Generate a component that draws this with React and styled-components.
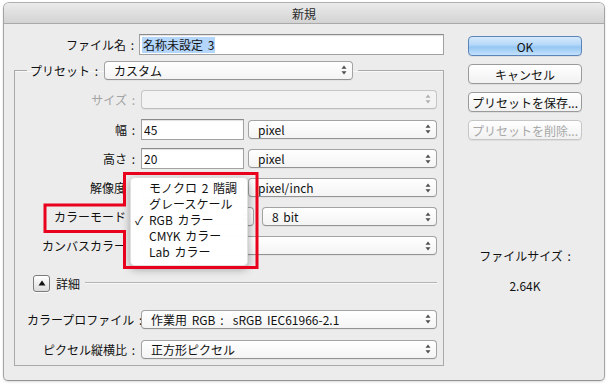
import React from 'react';
import styled, { createGlobalStyle } from 'styled-components';

const Global = createGlobalStyle`
  html, body { margin: 0; padding: 0; background: #fff; }
  body {
    font-family: "Noto Sans CJK JP", "Noto Sans", sans-serif;
    font-size: 12px;
    color: #111;
    word-spacing: 2px;
  }
  * { box-sizing: border-box; }
`;

const Page = styled.div`
  position: relative;
  width: 609px;
  height: 384px;
  padding: 3px 0 0 4px;
`;

const Window = styled.div`
  width: 600px;
  height: 377px;
  background: #ececec;
  border-radius: 5px 5px 4px 4px;
  box-shadow: 0 0 0 1px rgba(0, 0, 0, 0.28), 0 1px 3px rgba(0, 0, 0, 0.3);
  display: flex;
  flex-direction: column;
  overflow: hidden;
`;

const TitleBar = styled.div`
  flex: none;
  height: 21px;
  background: linear-gradient(#ebebeb, #d3d3d3);
  border-bottom: 1px solid #a9a9a9;
  display: flex;
  align-items: center;
  justify-content: center;
  font-size: 12px;
  color: #2a2a2a;
`;

const Body = styled.div`
  display: flex;
  padding: 10px 0 0 10px;
`;

const LeftCol = styled.div`
  width: 430px;
  display: flex;
  flex-direction: column;
`;

const FileRow = styled.div`
  display: grid;
  grid-template-columns: 120px 305px;
  column-gap: 5px;
  align-items: center;
  height: 21px;
`;

const Label = styled.div`
  text-align: right;
  white-space: nowrap;
  color: ${(p) => (p.$disabled ? '#a3a3a3' : '#111')};
  padding-right: ${(p) => (p.$covered ? 9 : 0)}px;
  ${(p) => (p.$w ? `width: ${p.$w}px; flex: none; margin-right: 6px;` : '')}
`;

const TextInput = styled.div`
  height: 21px;
  width: ${(p) => (p.$w ? `${p.$w}px` : '100%')};
  flex: none;
  background: #fff;
  border: 1px solid #a2a2a2;
  border-top-color: #8a8a8a;
  box-shadow: inset 0 1px 1px rgba(0, 0, 0, 0.12);
  display: flex;
  align-items: center;
  padding-left: 2px;
  white-space: nowrap;
  overflow: hidden;
`;

const Selected = styled.span`
  background: #b4d6fb;
  padding: 0 1px;
  line-height: 16px;
`;

const Group = styled.fieldset`
  margin: 5px 0 0 0;
  width: 430px;
  min-width: 0;
  border: 1px solid #a9a9a9;
  box-shadow: inset 0 1px 0 rgba(255, 255, 255, 0.6);
  padding: 4px 6px 1px 12px;
`;

const Legend = styled.legend`
  padding: 0 5px 0 3px;
  display: flex;
  align-items: center;
  gap: 6px;
  height: 20px;
`;

const SelectBox = styled.div`
  position: relative;
  height: ${(p) => p.$h || 19}px;
  width: ${(p) => (p.$w ? `${p.$w}px` : '100%')};
  flex: ${(p) => (p.$w ? 'none' : '1')};
  border: 1px solid ${(p) => (p.$disabled ? '#c6c6c6' : '#a3a3a3')};
  border-bottom-color: ${(p) => (p.$disabled ? '#bdbdbd' : '#939393')};
  border-radius: 4px;
  background: ${(p) =>
    p.$disabled ? '#f3f3f3' : 'linear-gradient(#ffffff, #f4f4f4)'};
  box-shadow: 0 1px 0 rgba(0, 0, 0, 0.04);
  display: flex;
  align-items: center;
  padding-left: 9px;
  white-space: pre;
  overflow: hidden;
  color: #111;
`;

const Arrows = styled.svg`
  position: absolute;
  right: 5px;
  top: 50%;
  margin-top: -5px;
`;

const SelectArrows = ({ disabled }) => (
  <Arrows width="6" height="10" viewBox="0 0 6 10">
    <path d="M3 0.5 L5.5 3.8 L0.5 3.8 Z" fill={disabled ? '#b0b0b0' : '#4e4e4e'} />
    <path d="M3 9.5 L5.5 6.2 L0.5 6.2 Z" fill={disabled ? '#b0b0b0' : '#4e4e4e'} />
  </Arrows>
);

const Select = ({ children, w, disabled }) => (
  <SelectBox $w={w} $disabled={disabled}>
    {children}
    <SelectArrows disabled={disabled} />
  </SelectBox>
);

const Row = styled.div`
  display: flex;
  align-items: center;
  height: ${(p) => p.$h}px;
  margin-top: ${(p) => p.$mt || 0}px;
`;

const Controls = styled.div`
  display: flex;
  align-items: center;
  gap: ${(p) => p.$gap || 4}px;
  flex: 1;
  min-width: 0;
`;

const DisclosureRow = styled.div`
  display: flex;
  align-items: center;
  height: 26px;
  margin-top: 10px;
  padding-left: 6px;
`;

const DisclosureButton = styled.div`
  width: 17px;
  height: 17px;
  flex: none;
  border: 1px solid #7c7c7c;
  border-radius: 3px;
  background: linear-gradient(#ffffff, #dcdcdc);
  box-shadow: 0 1px 0 rgba(255, 255, 255, 0.8);
  display: flex;
  align-items: center;
  justify-content: center;
`;

const DisclosureText = styled.span`
  margin-left: 6px;
`;

const Rule = styled.div`
  flex: 1;
  height: 2px;
  margin-left: 5px;
  border-top: 1px solid #b3b3b3;
  border-bottom: 1px solid #f8f8f8;
`;

const RightCol = styled.div`
  width: 114px;
  margin-left: 24px;
  display: flex;
  flex-direction: column;
  align-items: stretch;
  gap: 8px;
  padding-top: 2px;
`;

const Button = styled.div`
  height: 20px;
  border-radius: 4px;
  display: flex;
  align-items: center;
  justify-content: center;
  white-space: nowrap;
  border: 1px solid ${(p) => (p.$primary ? '#5d84b8' : p.$disabled ? '#c6c6c6' : '#9a9a9a')};
  background: ${(p) =>
    p.$primary
      ? 'linear-gradient(#d6eafc, #b3d7f8 45%, #94c6f3 55%, #c3e1fb)'
      : 'linear-gradient(#ffffff, #f1f1f1)'};
  color: ${(p) => (p.$disabled ? '#a8a8a8' : '#111')};
  box-shadow: 0 1px 0 rgba(0, 0, 0, 0.06);
`;

const Info = styled.div`
  text-align: center;
  line-height: 16px;
  margin-top: ${(p) => p.$mt}px;
`;

const Menu = styled.div`
  position: absolute;
  left: 130px;
  top: 177px;
  width: 118px;
  padding: 2px 0 5px;
  background: rgba(255, 255, 255, 0.98);
  border: 1px solid rgba(0, 0, 0, 0.12);
  border-radius: 5px;
  box-shadow: 0 3px 9px rgba(0, 0, 0, 0.35);
`;

const MenuItem = styled.div`
  position: relative;
  height: 16px;
  line-height: 16px;
  padding-left: 18px;
  white-space: nowrap;
  color: #111;
`;

const Check = styled.span`
  position: absolute;
  left: 4px;
  top: 0;
`;

const Annotation = styled.svg`
  position: absolute;
  left: 0;
  top: 0;
  pointer-events: none;
`;

export default function App() {
  return (
    <>
      <Global />
      <Page>
        <Window>
          <TitleBar>新規</TitleBar>
          <Body>
            <LeftCol>
              <FileRow>
                <Label>ファイル名 :</Label>
                <TextInput>
                  <Selected>名称未設定 3</Selected>
                </TextInput>
              </FileRow>
              <Group>
                <Legend>
                  <span>プリセット :</span>
                  <Select w={249}>カスタム</Select>
                </Legend>
                <Row $h={30}>
                  <Label $w={108} $disabled>サイズ :</Label>
                  <Controls>
                    <Select disabled />
                  </Controls>
                </Row>
                <Row $h={30}>
                  <Label $w={108}>幅 :</Label>
                  <Controls>
                    <TextInput $w={103}>45</TextInput>
                    <Select>pixel</Select>
                  </Controls>
                </Row>
                <Row $h={29}>
                  <Label $w={108}>高さ :</Label>
                  <Controls>
                    <TextInput $w={103}>20</TextInput>
                    <Select>pixel</Select>
                  </Controls>
                </Row>
                <Row $h={29}>
                  <Label $w={108} $covered>解像度</Label>
                  <Controls>
                    <TextInput $w={103} />
                    <Select>pixel/inch</Select>
                  </Controls>
                </Row>
                <Row $h={29}>
                  <Label $w={108} $covered>カラーモード</Label>
                  <Controls $gap={8}>
                    <Select w={113} />
                    <Select>8 bit</Select>
                  </Controls>
                </Row>
                <Row $h={29}>
                  <Label $w={108} $covered>カンバスカラー</Label>
                  <Controls>
                    <Select />
                  </Controls>
                </Row>
                <DisclosureRow>
                  <DisclosureButton>
                    <svg width="8" height="6" viewBox="0 0 8 6">
                      <path d="M4 0.5 L7.5 5.5 L0.5 5.5 Z" fill="#111" />
                    </svg>
                  </DisclosureButton>
                  <DisclosureText>詳細</DisclosureText>
                  <Rule />
                </DisclosureRow>
                <Row $h={30} $mt={8}>
                  <Label $w={108}>カラープロファイル :</Label>
                  <Controls>
                    <Select>作業用 RGB :  sRGB IEC61966-2.1</Select>
                  </Controls>
                </Row>
                <Row $h={30}>
                  <Label $w={108}>ピクセル縦横比 :</Label>
                  <Controls>
                    <Select>正方形ピクセル</Select>
                  </Controls>
                </Row>
              </Group>
            </LeftCol>
            <RightCol>
              <Button $primary>OK</Button>
              <Button>キャンセル</Button>
              <Button>プリセットを保存...</Button>
              <Button $disabled>プリセットを削除...</Button>
              <Info $mt={100}>ファイルサイズ :</Info>
              <Info $mt={6}>2.64K</Info>
            </RightCol>
          </Body>
        </Window>
        <Menu>
          <MenuItem>モノクロ 2 階調</MenuItem>
          <MenuItem>グレースケール</MenuItem>
          <MenuItem>
            <Check>✓</Check>RGB カラー
          </MenuItem>
          <MenuItem>CMYK カラー</MenuItem>
          <MenuItem>Lab カラー</MenuItem>
        </Menu>
        <Annotation width="609" height="384" viewBox="0 0 609 384">
          <path
            d="M124.5 173.5 H257 V267.5 H124.5 V231.5 H45 V205 H124.5 Z"
            fill="none"
            stroke="#e8001d"
            strokeWidth="3"
          />
        </Annotation>
      </Page>
    </>
  );
}
